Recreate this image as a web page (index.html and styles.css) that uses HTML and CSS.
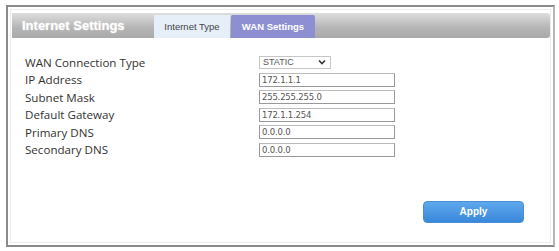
FILE: index.html
```html
<!DOCTYPE html>
<html lang="en">
<head>
  <meta charset="UTF-8">
  <title>Internet Settings</title>
  <link rel="stylesheet" href="styles.css">
</head>
<body>
  <div class="frame">
    <div class="inner">
      <div class="bar">
        <h1>Internet Settings</h1>
        <div class="tab">Internet Type</div>
        <div class="tab active">WAN Settings</div>
      </div>

      <div class="form">
        <div class="row">
          <label>WAN Connection Type</label>
          <div class="select">STATIC
            <svg width="8" height="6" viewBox="0 0 8 6"><path d="M1 1.5 L4 4.5 L7 1.5" fill="none" stroke="#333" stroke-width="1.6"/></svg>
          </div>
        </div>
        <div class="row">
          <label>IP Address</label>
          <input type="text" value="172.1.1.1">
        </div>
        <div class="row">
          <label>Subnet Mask</label>
          <input type="text" value="255.255.255.0">
        </div>
        <div class="row">
          <label>Default Gateway</label>
          <input type="text" value="172.1.1.254">
        </div>
        <div class="row">
          <label>Primary DNS</label>
          <input type="text" value="0.0.0.0">
        </div>
        <div class="row">
          <label>Secondary DNS</label>
          <input type="text" value="0.0.0.0">
        </div>
      </div>

      <div class="actions">
        <button class="btn">Apply</button>
      </div>
    </div>
  </div>
</body>
</html>
```

FILE: styles.css
```css
* { margin:0; padding:0; box-sizing:border-box; }
body { background:#fff; font-family:'Open Sans', 'DejaVu Sans', sans-serif; color:#333; }
.frame {
  margin:5px 4px 0 6px; height:242px;
  border:2px solid #8a8a8a; border-right-color:#b5b5b5;
  padding:2px;
}
.inner {
  height:100%; border:1px solid #ececec;
  padding:3px 0 0 1px;
  display:flex; flex-direction:column;
}
.bar {
  display:flex; align-items:flex-end; height:25px;
  background:linear-gradient(#dedede, #b4b4b4 60%, #aaa);
  border-radius:0 3px 3px 0;
}
.bar h1 {
  width:142px; padding-left:10px; align-self:center;
  font-size:13px; font-weight:bold; color:#fff;
  font-family:'Liberation Sans', Arial, sans-serif;
  text-shadow:0 0 2px rgba(255,255,255,.6);
}
.tab {
  height:23px; line-height:23px; font-size:9.5px;
  font-family:'Liberation Sans', Arial, sans-serif;
  margin-right:1px;
  background:#e6eef8; color:#444;
  width:76px; text-align:center;
}
.tab.active {
  background:#8e8fd2; color:#fff; width:84px;
  font-weight:bold; border-radius:2px 2px 0 0;
}
.form { padding:17px 0 0 13px; display:flex; flex-direction:column; gap:3.6px; }
.row { display:flex; align-items:center; height:14px; }
.row label { width:234px; font-size:11.6px; color:#333; }
.row input {
  width:136px; height:14px; border:1px solid #999; border-top-color:#bbb;
  font-size:8.5px; color:#555; padding:0 2px;
  font-family:'DejaVu Sans', sans-serif; letter-spacing:-0.2px;
}
.select {
  width:72px; height:13px; border:1px solid #c6c6c6;
  font-size:9px; color:#555; padding:0 4px 0 3px; line-height:12px;
  display:flex; justify-content:space-between; align-items:center;
  font-family:'Liberation Sans', Arial, sans-serif;
}
.actions { display:flex; justify-content:flex-end; padding:44px 26px 0 0; }
.btn {
  width:101px; height:22px; border:1px solid #4a8fd6; border-radius:4px;
  background:linear-gradient(#5ea8ec, #3a88dc);
  color:#fff; font-size:10px; font-weight:bold;
  font-family:'Liberation Sans', Arial, sans-serif;
}
```
